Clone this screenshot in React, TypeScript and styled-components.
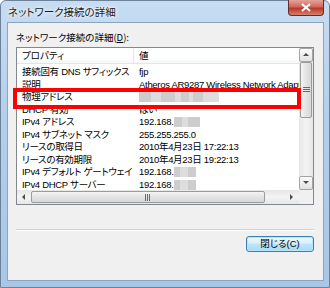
import React from "react";
import styled, { createGlobalStyle } from "styled-components";

const GlobalStyle = createGlobalStyle`
  html, body {
    margin: 0;
    padding: 0;
    background: #ffffff;
  }
  body {
    font-family: "Liberation Sans", "Noto Sans CJK JP", sans-serif;
  }
`;

type PropRow = {
  name: string;
  value?: string;
  blur?: number[];
};

const rows: PropRow[] = [
  { name: "接続固有 DNS サフィックス", value: "fjp" },
  { name: "説明", value: "Atheros AR9287 Wireless Network Adapter" },
  { name: "物理アドレス", blur: [12, 10, 14, 6, 8, 4, 10, 16] },
  { name: "DHCP 有効", value: "はい" },
  { name: "IPv4 アドレス", value: "192.168.", blur: [8, 6, 12] },
  { name: "IPv4 サブネット マスク", value: "255.255.255.0" },
  { name: "リースの取得日", value: "2010年4月23日  17:22:13" },
  { name: "リースの有効期限", value: "2010年4月23日  19:22:13" },
  { name: "IPv4 デフォルト ゲートウェイ", value: "192.168.", blur: [6, 8, 8] },
  { name: "IPv4 DHCP サーバー", value: "192.168.", blur: [6, 8, 8] },
];

const Window = styled.div`
  width: 330px;
  height: 288px;
  box-sizing: border-box;
  border: 1px solid #6d8198;
  border-radius: 6px 6px 0 0;
  background: linear-gradient(180deg, #c6dcf2 0%, #b4cfec 40%, #a9c6e6 100%);
  padding: 0 5px 6px 6px;
  display: flex;
  flex-direction: column;
`;

const TitleBar = styled.div`
  height: 21px;
  display: flex;
  align-items: flex-start;
  justify-content: space-between;
`;

const Title = styled.span`
  margin: 4px 0 0 1px;
  font-family: "Noto Sans CJK JP", sans-serif;
  font-feature-settings: "palt";
  font-size: 10.5px;
  line-height: 14px;
  color: #1b1b1b;
  text-shadow: 0 0 6px #ffffff, 0 0 3px #ffffff;
`;

const CloseButton = styled.div`
  width: 36px;
  height: 16px;
  margin-top: -1px;
  box-sizing: border-box;
  border: 1px solid #6b2a2a;
  border-top: none;
  border-radius: 0 0 4px 4px;
  background: linear-gradient(180deg, #e3a59a 0%, #d0685a 45%, #b8382a 55%, #d8806c 100%);
  display: flex;
  align-items: center;
  justify-content: center;
`;

const Client = styled.div`
  flex: 1;
  box-sizing: border-box;
  border: 1px solid #8ea4bd;
  background: #f0f0f0;
  padding: 7px 9px 0 8px;
  display: flex;
  flex-direction: column;
`;

const Caption = styled.div`
  font-family: "Noto Sans CJK JP", sans-serif;
  font-feature-settings: "palt";
  font-size: 9.5px;
  line-height: 15px;
  color: #000;
  height: 17px;

  u {
    text-decoration: underline;
  }
`;

const ListBox = styled.div`
  position: relative;
  width: 298px;
  height: 158px;
  box-sizing: border-box;
  border: 1px solid #828790;
  background: #fff;
  display: grid;
  grid-template-columns: 1fr 14px;
  grid-template-rows: 1fr 14px;
`;

const ListBody = styled.div`
  overflow: hidden;
  font-size: 9.5px;
  color: #000;
`;

const HeaderRow = styled.div`
  display: grid;
  grid-template-columns: 117px 1fr;
  height: 16px;
  box-sizing: border-box;
  border-bottom: 1px solid #e5e5e5;
  background: linear-gradient(180deg, #ffffff 0%, #ffffff 60%, #f6f7f8 100%);
`;

const HeaderCell = styled.div<{ $divider?: boolean }>`
  padding-left: 5px;
  line-height: 15px;
  font-family: "Noto Sans CJK JP", sans-serif;
  font-feature-settings: "palt";
  border-right: ${(p) => (p.$divider ? "1px solid #e5e5e5" : "none")};
  white-space: nowrap;
`;

const Rows = styled.div`
  padding-top: 2px;
`;

const Row = styled.div`
  display: grid;
  grid-template-columns: 117px 1fr;
  height: 12.5px;
  line-height: 12.5px;
  white-space: nowrap;
`;

const NameCell = styled.div`
  padding-left: 5px;
  font-family: "Liberation Sans", "Noto Sans CJK JP", sans-serif;
  font-feature-settings: "palt";
  letter-spacing: -0.3px;
  overflow: hidden;
`;

const ValueCell = styled.div`
  padding-left: 5px;
  font-family: "Liberation Sans", "Noto Sans CJK JP", sans-serif;
  font-feature-settings: "palt";
  letter-spacing: -0.3px;
  overflow: hidden;
  display: flex;
  align-items: center;
`;

const Blur = styled.span`
  display: inline-flex;
  height: 10px;
  align-items: stretch;
`;

const BlurBlock = styled.span<{ $shade: number }>`
  display: inline-block;
  background: ${(p) => (p.$shade % 2 ? "#d9d9d9" : "#c8c8c8")};
  opacity: 0.9;
`;

const VScroll = styled.div`
  grid-row: 1 / 2;
  grid-column: 2 / 3;
  background: linear-gradient(90deg, #e6e6e6, #f4f4f4 50%, #e6e6e6);
  display: flex;
  flex-direction: column;
  justify-content: space-between;
`;

const HScroll = styled.div`
  grid-row: 2 / 3;
  grid-column: 1 / 2;
  background: linear-gradient(180deg, #e6e6e6, #f4f4f4 50%, #e6e6e6);
  display: flex;
  align-items: stretch;
`;

const Corner = styled.div`
  grid-row: 2 / 3;
  grid-column: 2 / 3;
  background: #f0f0f0;
`;

const ArrowButton = styled.div<{ $boxed?: boolean }>`
  width: 14px;
  height: 14px;
  box-sizing: border-box;
  border: 1px solid ${(p) => (p.$boxed ? "#a5a5a5" : "transparent")};
  border-radius: 2px;
  background: ${(p) =>
    p.$boxed ? "linear-gradient(180deg, #fbfbfb, #e3e3e3)" : "transparent"};
  display: flex;
  align-items: center;
  justify-content: center;
  flex-shrink: 0;
`;

const VThumb = styled.div`
  margin: 0 1px;
  height: 56px;
  margin-bottom: auto;
  box-sizing: border-box;
  border: 1px solid #9b9b9b;
  border-radius: 2px;
  background: linear-gradient(90deg, #f4f4f4, #e4e4e4 50%, #d8d8d8);
  display: flex;
  align-items: center;
  justify-content: center;
`;

const HThumb = styled.div`
  width: 234px;
  margin: 1px 0;
  box-sizing: border-box;
  border: 1px solid #9b9b9b;
  border-radius: 2px;
  background: linear-gradient(180deg, #f4f4f4, #e4e4e4 50%, #d8d8d8);
  display: flex;
  align-items: center;
  justify-content: center;
`;

const Spacer = styled.div`
  flex: 1;
`;

const Highlight = styled.div`
  position: absolute;
  left: -4px;
  top: 40px;
  width: 288px;
  height: 21px;
  box-sizing: border-box;
  border: 4px solid #ff0000;
  pointer-events: none;
`;

const Separator = styled.div`
  margin-top: 24px;
  width: 298px;
  height: 1px;
  background: #d2d2d2;
  border-bottom: 1px solid #ffffff;
`;

const Footer = styled.div`
  display: flex;
  justify-content: flex-end;
  width: 298px;
  margin-top: 5px;
`;

const PushButton = styled.button`
  width: 68px;
  height: 16px;
  box-sizing: border-box;
  border: 1px solid #3c7fb1;
  border-radius: 3px;
  padding: 0;
  background: linear-gradient(180deg, #eaf6fd 0%, #d9f0fc 45%, #bee6fd 50%, #a7d9f5 100%);
  box-shadow: inset 0 0 0 1px #b8e4fb;
  font-family: "Liberation Sans", "Noto Sans CJK JP", sans-serif;
  font-feature-settings: "palt";
  font-size: 9.5px;
  line-height: 14px;
  color: #000;
`;

const Arrow: React.FC<{ dir: "up" | "down" | "left" | "right" }> = ({ dir }) => {
  const pts = {
    up: "1,5 4,2 7,5",
    down: "1,2 4,5 7,2",
    left: "5,1 2,4 5,7",
    right: "2,1 5,4 2,7",
  }[dir];
  return (
    <svg width="8" height="8" viewBox="0 0 8 8">
      <polygon points={pts} fill="#4d4d4d" />
    </svg>
  );
};

const Grip: React.FC<{ vertical?: boolean }> = ({ vertical }) => (
  <svg width={vertical ? 7 : 6} height={vertical ? 6 : 7}>
    {[0, 2, 4].map((o) =>
      vertical ? (
        <rect key={o} x={0} y={o} width={7} height={1} fill="#6a6a6a" />
      ) : (
        <rect key={o} x={o} y={0} width={1} height={7} fill="#6a6a6a" />
      )
    )}
  </svg>
);

const BlurCells: React.FC<{ widths: number[] }> = ({ widths }) => (
  <Blur>
    {widths.map((w, i) => (
      <BlurBlock key={i} $shade={i} style={{ width: w }} />
    ))}
  </Blur>
);

const App: React.FC = () => {
  return (
    <>
      <GlobalStyle />
      <Window>
        <TitleBar>
          <Title>ネットワーク接続の詳細</Title>
          <CloseButton>
            <svg width="10" height="9" viewBox="0 0 10 9">
              <path d="M1 1 L9 8 M9 1 L1 8" stroke="#ffffff" strokeWidth="2.2" />
            </svg>
          </CloseButton>
        </TitleBar>
        <Client>
          <Caption>
            ネットワーク接続の詳細(<u>D</u>):
          </Caption>
          <ListBox>
            <ListBody>
              <HeaderRow>
                <HeaderCell $divider>プロパティ</HeaderCell>
                <HeaderCell>値</HeaderCell>
              </HeaderRow>
              <Rows>
                {rows.map((r) => (
                  <Row key={r.name}>
                    <NameCell>{r.name}</NameCell>
                    <ValueCell>
                      {r.value}
                      {r.blur && <BlurCells widths={r.blur} />}
                    </ValueCell>
                  </Row>
                ))}
              </Rows>
            </ListBody>
            <VScroll>
              <ArrowButton $boxed>
                <Arrow dir="up" />
              </ArrowButton>
              <VThumb>
                <Grip vertical />
              </VThumb>
              <ArrowButton $boxed>
                <Arrow dir="down" />
              </ArrowButton>
            </VScroll>
            <HScroll>
              <ArrowButton>
                <Arrow dir="left" />
              </ArrowButton>
              <HThumb>
                <Grip />
              </HThumb>
              <Spacer />
              <ArrowButton>
                <Arrow dir="right" />
              </ArrowButton>
            </HScroll>
            <Corner />
            <Highlight />
          </ListBox>
          <Separator />
          <Footer>
            <PushButton>閉じる(C)</PushButton>
          </Footer>
        </Client>
      </Window>
    </>
  );
};

export default App;
